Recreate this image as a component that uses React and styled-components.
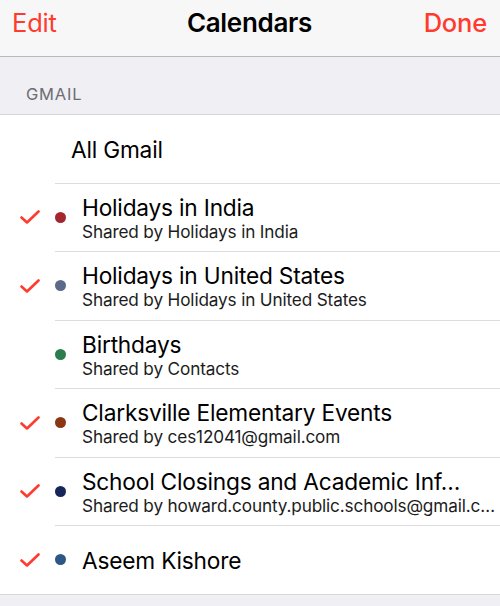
import React from 'react'
import styled, { createGlobalStyle } from 'styled-components'

const Global = createGlobalStyle`
  html, body {
    margin: 0;
    padding: 0;
    background: #efeff4;
  }
  body {
    font-family: Inter, "Liberation Sans", Arial, sans-serif;
    -webkit-font-smoothing: antialiased;
  }
`

const Page = styled.div`
  width: 500px;
  height: 606px;
  overflow: hidden;
  background: #efeff4;
`

const NavBar = styled.div`
  height: 57px;
  box-sizing: border-box;
  background: #f7f7f7;
  border-bottom: 1px solid #b9b9bd;
  display: grid;
  grid-template-columns: 1fr auto 1fr;
  align-items: center;
  padding: 0 13px 12px 12px;
`

const NavButton = styled.span`
  color: #ff3b30;
  font-size: 25.5px;
  font-weight: ${p => (p.$bold ? 500 : 400)};
  justify-self: ${p => (p.$right ? 'end' : 'start')};
  letter-spacing: -0.2px;
`

const Title = styled.span`
  font-size: 26px;
  font-weight: 600;
  color: #000;
  letter-spacing: -0.3px;
`

const SectionHeader = styled.div`
  height: 57px;
  box-sizing: border-box;
  padding: 0 26px 10px;
  display: flex;
  align-items: flex-end;
  font-size: 16.5px;
  color: #6d6d72;
  letter-spacing: 0.8px;
`

const List = styled.div`
  background: #fff;
  border-top: 1px solid #d6d6da;
  border-bottom: 1px solid #d6d6da;
`

const Row = styled.div`
  height: 67.5px;
  display: grid;
  grid-template-columns: 55px 27px 1fr;
  align-items: center;
  & + & {
    border-top: 1px solid #dcdce0;
    margin-left: 55px;
    grid-template-columns: 0 27px 1fr;
  }
  & + & > :first-child {
    margin-left: -55px;
    width: 55px;
  }
`

const CheckCell = styled.div`
  display: flex;
  align-items: center;
  justify-content: center;
  height: 100%;
  padding-left: 2px;
`

const Dot = styled.span`
  width: 11px;
  height: 11px;
  border-radius: 50%;
  background: ${p => p.$color};
`

const Texts = styled.div`
  min-width: 0;
  display: flex;
  flex-direction: column;
  justify-content: center;
  padding-top: 2px;
`

const Name = styled.div`
  font-size: 22.7px;
  color: #000;
  line-height: 26px;
  white-space: nowrap;
  letter-spacing: -0.2px;
  margin-left: ${p => (p.$plain ? '-11px' : '0')};
  padding-top: ${p => (p.$plain ? '2px' : '0')};
`

const Sub = styled.div`
  font-size: 17.2px;
  color: #1c1c1c;
  line-height: 21px;
  white-space: nowrap;
  letter-spacing: -0.15px;
`

const Check = () => (
  <svg width="20" height="14" viewBox="0 0 20 14">
    <path d="M1.5 7.5 L7 12.5 L18.5 1.5" fill="none" stroke="#ff3b30" strokeWidth="2.6" strokeLinecap="round" strokeLinejoin="round" />
  </svg>
)

const calendars = [
  { name: 'Holidays in India', sub: 'Shared by Holidays in India', color: '#a3282e', checked: true },
  { name: 'Holidays in United States', sub: 'Shared by Holidays in United States', color: '#5b6a8b', checked: true },
  { name: 'Birthdays', sub: 'Shared by Contacts', color: '#2b7d4e', checked: false },
  { name: 'Clarksville Elementary Events', sub: 'Shared by ces12041@gmail.com', color: '#8a3612', checked: true },
  { name: 'School Closings and Academic Inf…', sub: 'Shared by howard.county.public.schools@gmail.c…', color: '#16265a', checked: true },
  { name: 'Aseem Kishore', color: '#2d5886', checked: true },
]

export default function App() {
  return (
    <Page>
      <Global />
      <NavBar>
        <NavButton>Edit</NavButton>
        <Title>Calendars</Title>
        <NavButton $right $bold>Done</NavButton>
      </NavBar>
      <SectionHeader>GMAIL</SectionHeader>
      <List>
        <Row>
          <CheckCell />
          <span />
          <Name $plain>All Gmail</Name>
        </Row>
        {calendars.map(c => (
          <Row key={c.name}>
            <CheckCell>{c.checked && <Check />}</CheckCell>
            <Dot $color={c.color} />
            <Texts>
              <Name>{c.name}</Name>
              {c.sub && <Sub>{c.sub}</Sub>}
            </Texts>
          </Row>
        ))}
      </List>
    </Page>
  )
}
